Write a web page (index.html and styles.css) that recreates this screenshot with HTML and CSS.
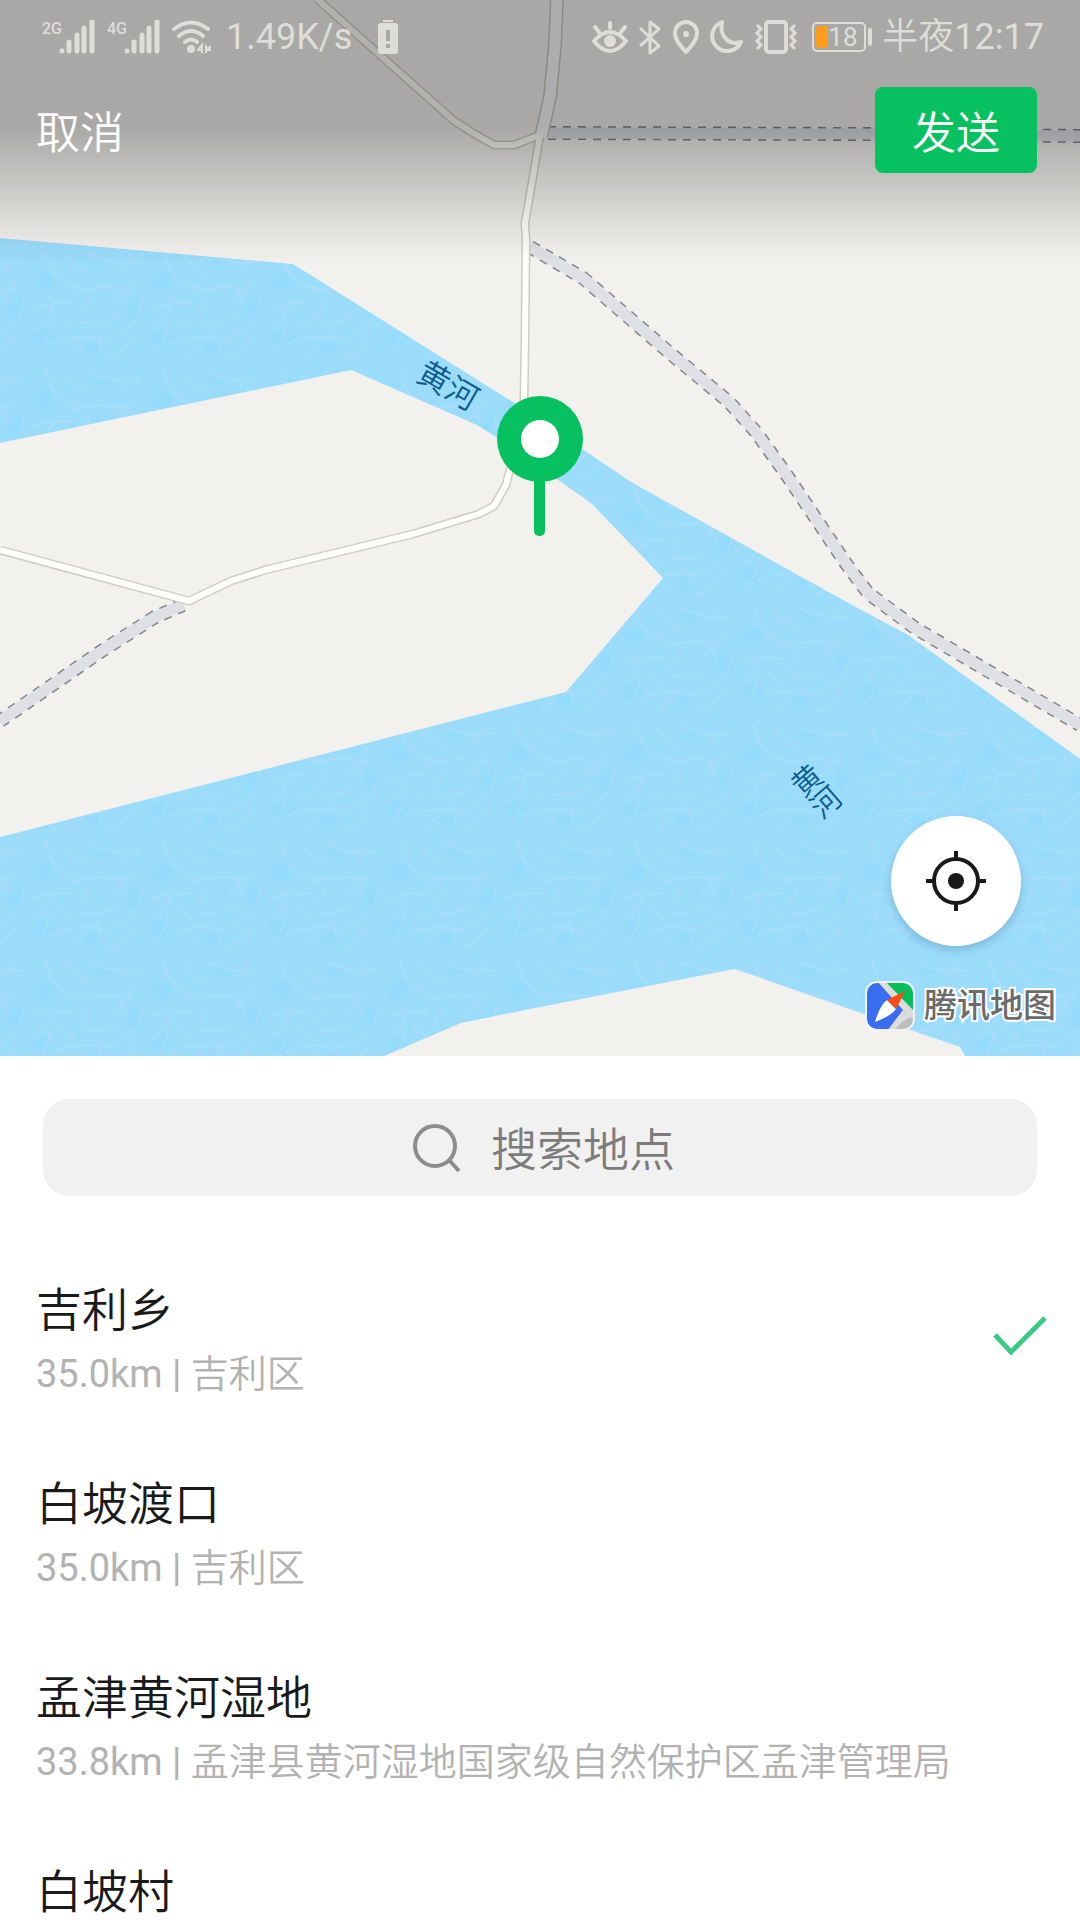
FILE: index.html
```html
<!DOCTYPE html>
<html lang="zh-CN">
<head>
<meta charset="utf-8">
<meta name="viewport" content="width=device-width, initial-scale=1">
<title>发送位置</title>
<link rel="stylesheet" href="styles.css">
</head>
<body>
<div class="app">
  <section class="map">
    <svg class="map-canvas" viewBox="0 0 1080 1056" aria-label="地图">
      <defs>
        <pattern id="ripple" width="118" height="118" patternUnits="userSpaceOnUse" patternTransform="translate(30 12)">
          <rect width="118" height="118" fill="#9bdcfb"/>
          <g fill="#8fd9fb" opacity=".5">
            <path d="M6 30l14-6 6 10-8 8-12-2zM98 54l12-4 4 14-8 10-8-8zM4 84l14-4 8 12-12 8-8-4zM50 98l18-4 8 6-14 6zM62 8l14 2 4 8-16 2z"/>
          </g>
          <g fill="none" stroke="#a8dcfb" stroke-width="2" stroke-linecap="round">
            <path d="M16 4q3 20 14 28t22 8M36 8q10 14 24 18M44 44q30-8 58-2M60 6q24 12 50 8"/>
            <path d="M104 32q-8 14-22 24M112 52q-2 20-16 30t-26 10M4 60q24-6 40-4M24 52q-4 20-18 30"/>
            <path d="M52 74q20 4 36-6M20 96q18-8 50-6M8 104q10-12 12-28M78 110q16-4 26-22M88 40l8 16M30 70l14 12M60 50l-10 18M100 8l-8 14M66 84l6 18M40 108l14-12"/>
          </g>
        </pattern>
      </defs>
      <rect width="1080" height="1056" fill="#f3f1ee"/>
      <path fill="url(#ripple)" d="M0 238L293 264L516 404L631 482L843 600L908 635L1080 759V1056H965L960 1047L864 1014L735 969L540 1007L461 1023L384 1056H0V837L566 692L663 578L591 503L558 480L496 437L477 425L351 370L0 443Z"/>
      <g fill="none" stroke-linejoin="round">
        <g stroke="#85858a" stroke-width="14" stroke-dasharray="8 7">
          <path d="M548 133L860 134L1080 136"/>
          <path d="M530 247L583 278L671 354L729 402L756 432L786 474L847 565L868 593L915 628L1080 725"/>
          <path d="M183 605L155 617L103 650L0 721"/>
        </g>
        <g stroke="#dfe0e6" stroke-width="11">
          <path d="M548 133L860 134L1080 136"/>
          <path d="M530 247L583 278L671 354L729 402L756 432L786 474L847 565L868 593L915 628L1080 725"/>
          <path d="M183 605L155 617L103 650L0 721"/>
        </g>
        <g stroke="#cdcdc6" stroke-width="9">
          <path d="M316 -2L453 120L473 133L494 145H514L540 135"/>
          <path d="M540 135L529 200L525 223L526 240L525 340L524 400L519 440L509 473L506 485L494 506L479 514L413 534L265 570L231 581L189 601L0 550"/>
        </g>
        <path d="M557 -2L555 45L550 97L541 137" stroke="#c4c4c2" stroke-width="14"/>
        <path d="M557 -2L555 45L550 97L541 137" stroke="#f7f8f9" stroke-width="11"/>
        <g stroke="#fefefa" stroke-width="6">
          <path d="M316 -2L453 120L473 133L494 145H514L540 135"/>
          <path d="M540 135L529 200L525 223L526 240L525 340L524 400L519 440L509 473L506 485L494 506L479 514L413 534L265 570L231 581L189 601L0 550"/>
        </g>
      </g>
      <g class="river-name">
        <text transform="translate(448 386) rotate(30)" dominant-baseline="central">黄河</text>
        <g transform="translate(817 792) rotate(-41)">
          <text y="-15" dominant-baseline="central">黄</text>
          <text y="14" dominant-baseline="central">河</text>
        </g>
      </g>
      <g fill="#07c160">
        <rect x="534" y="470" width="11" height="66" rx="5"/>
        <circle cx="540" cy="439" r="43"/>
        <circle cx="540" cy="439" r="19" fill="#fff"/>
      </g>
    </svg>

    <header class="top">
      <div class="status">
        <div class="status-left">
          <span class="signal">
            <span class="net">2G</span>
            <svg width="36" height="34" viewBox="0 0 36 34"><path d="M3 31v0M10 22v9M18 15v16M25 8v23M33 2v29" stroke="currentColor" stroke-width="5" stroke-linecap="round"/></svg>
          </span>
          <span class="signal">
            <span class="net">4G</span>
            <svg width="36" height="34" viewBox="0 0 36 34"><path d="M3 31v0M10 22v9M18 15v16M25 8v23M33 2v29" stroke="currentColor" stroke-width="5" stroke-linecap="round"/></svg>
          </span>
          <svg class="wifi" width="40" height="34" viewBox="0 0 40 34"><g fill="none" stroke="currentColor" stroke-width="4" stroke-linecap="round"><path d="M2 9Q19-4 36 9M7 16Q19 6 31 16M13 22Q19 17 25 22"/></g><circle cx="19" cy="29" r="4" fill="currentColor"/><path d="M30 33V25l-4 5h5M34 25v8M34 29l4-2v3h-4" fill="none" stroke="currentColor" stroke-width="2"/></svg>
          <span class="status-text latin">1.49K/s</span>
          <svg class="alert" width="20" height="34" viewBox="0 0 20 34"><path fill="currentColor" fill-rule="evenodd" d="M5 0h10v2H5zM3 3h14q3 0 3 3v25q0 3-3 3H3q-3 0-3-3V6q0-3 3-3zM8 10v11h4V10zM8 24v4h4v-4z"/></svg>
        </div>
        <div class="status-right">
          <svg width="36" height="34" viewBox="0 0 36 34"><g fill="none" stroke="currentColor" stroke-width="4" stroke-linecap="round"><path d="M2 21Q18 3 34 21Q18 41 2 21ZM18 8V3M7 12L3 7M29 12l4-5"/></g><circle cx="18" cy="21" r="6" fill="currentColor"/></svg>
          <svg width="24" height="36" viewBox="0 0 24 36"><path d="M2 9l19 18-9 7V3l9 7L2 27" fill="none" stroke="currentColor" stroke-width="3" stroke-linejoin="round"/></svg>
          <svg width="28" height="34" viewBox="0 0 28 34"><path d="M14 32C8 25 3 20 3 13a11 11 0 0 1 22 0c0 7-5 12-11 19z" fill="none" stroke="currentColor" stroke-width="4" stroke-linejoin="round"/><circle cx="14" cy="14" r="3" fill="currentColor"/></svg>
          <svg width="34" height="34" viewBox="0 0 34 34"><path d="M12 2A15 15 0 1 0 31 22C19 26 9 16 12 2Z" fill="none" stroke="currentColor" stroke-width="4" stroke-linejoin="round"/></svg>
          <svg width="44" height="34" viewBox="0 0 44 34"><g fill="none" stroke="currentColor" stroke-width="4"><rect x="12" y="2" width="20" height="30" rx="3"/><path stroke-width="3" d="M3 5l4 4-4 4 4 4-4 4 4 4-4 4M41 5l-4 4 4 4-4 4 4 4-4 4 4 4"/></g></svg>
          <span class="battery"><span class="battery-body latin"><span class="battery-level"></span>18</span><span class="battery-tip"></span></span>
          <time class="status-text">半夜<span class="latin">12:17</span></time>
        </div>
      </div>
      <nav class="actions">
        <button class="cancel" type="button">取消</button>
        <button class="send" type="button">发送</button>
      </nav>
    </header>

    <div class="map-tools">
      <button class="locate" type="button" aria-label="定位">
        <svg width="60" height="60" viewBox="0 0 60 60"><circle cx="30" cy="30" r="22" fill="none" stroke="#1a1a1a" stroke-width="4"/><circle cx="30" cy="30" r="8" fill="#1a1a1a"/><path d="M30 0v8M30 52v8M0 30h8M52 30h8" stroke="#1a1a1a" stroke-width="4"/></svg>
      </button>
      <div class="brand">
        <svg width="50" height="50" viewBox="0 0 50 50">
          <defs><clipPath id="tile"><rect x="1" y="1" width="48" height="48" rx="11"/></clipPath></defs>
          <g clip-path="url(#tile)">
            <rect width="50" height="50" fill="#dcdcdc"/>
            <path d="M0 0H12L38 29L22 50H0Z" fill="#3a6df0"/>
            <path d="M20 0H50V31Z" fill="#08bd5b"/>
            <path d="M30 50Q35 40 46 36L50 40V50Z" fill="#bdbdbd"/>
          </g>
          <rect x="1" y="1" width="48" height="48" rx="11" fill="none" stroke="#eef4f7" stroke-width="2"/>
          <path d="M22 19L31 28Q26 35 10 41Q15 24 22 19Z" fill="#fff"/>
          <path d="M40 10L22 19L31 28Z" fill="#fa4b10"/>
        </svg>
        <span>腾讯地图</span>
      </div>
    </div>
  </section>

  <main class="sheet">
    <label class="search">
      <svg width="48" height="50" viewBox="0 0 48 50" aria-hidden="true"><circle cx="22" cy="23" r="20" fill="none" stroke="#8c8c8c" stroke-width="4"/><path d="M36 37L46 48" stroke="#8c8c8c" stroke-width="4"/></svg>
      <input type="text" placeholder="搜索地点" aria-label="搜索地点">
    </label>
    <ul class="places">
      <li><label class="place">
        <input type="radio" name="place" checked>
        <span class="place-text"><span class="place-name">吉利乡</span><span class="place-info"><span class="latin">35.0km | </span>吉利区</span></span>
        <svg class="tick" width="54" height="40" viewBox="0 0 54 40" aria-hidden="true"><path d="M2 19L18 36L52 2" fill="none" stroke="#3cc984" stroke-width="5"/></svg>
      </label></li>
      <li><label class="place">
        <input type="radio" name="place">
        <span class="place-text"><span class="place-name">白坡渡口</span><span class="place-info"><span class="latin">35.0km | </span>吉利区</span></span>
      </label></li>
      <li><label class="place">
        <input type="radio" name="place">
        <span class="place-text"><span class="place-name">孟津黄河湿地</span><span class="place-info"><span class="latin">33.8km | </span>孟津县黄河湿地国家级自然保护区孟津管理局</span></span>
      </label></li>
      <li><label class="place">
        <input type="radio" name="place">
        <span class="place-text"><span class="place-name">白坡村</span></span>
      </label></li>
    </ul>
  </main>
</div>
</body>
</html>
```
FILE: styles.css
```css
* {
  box-sizing: border-box;
}

body {
  margin: 0;
  background: #fff;
  color: #1a1a1a;
  font-family: Roboto, "Noto Sans CJK SC", sans-serif;
  font-weight: 350;
}

button,
input {
  margin: 0;
  padding: 0;
  border: 0;
  background: none;
  font: inherit;
}

svg {
  display: block;
  flex: none;
}

.latin {
  font-weight: 400;
}

.app {
  display: flex;
  flex-direction: column;
  height: 100vh;
  overflow: hidden;
}

/* Map */
.map {
  position: relative;
  flex: none;
}

.map-canvas {
  width: 100%;
  height: auto;
}

.river-name {
  fill: #0b5c8f;
  font-size: 32px;
  text-anchor: middle;
}

.river-name g {
  font-size: 30px;
}

.top {
  position: absolute;
  inset: 0 0 auto;
  height: 264px;
  background: linear-gradient(rgba(0, 0, 0, 0.3) 48%, rgba(0, 0, 0, 0.16) 72%, rgba(0, 0, 0, 0.07) 86%, transparent);
}

.status {
  display: flex;
  justify-content: space-between;
  align-items: center;
  height: 74px;
  padding: 0 36px 0 42px;
  color: #deded9;
}

.status-left,
.status-right,
.signal {
  display: flex;
  align-items: center;
}

.signal {
  margin-right: 12px;
}

.net {
  width: 17px;
  height: 34px;
  font-size: 16px;
  font-weight: 500;
  line-height: 18px;
}

.wifi {
  margin-right: 14px;
}

.status-text {
  font-size: 36px;
  line-height: 40px;
}

.alert {
  margin-left: 26px;
}

.status-right {
  gap: 10px;
}

.battery {
  display: flex;
  align-items: center;
  gap: 2px;
  margin-left: 4px;
}

.battery-body {
  display: flex;
  align-items: center;
  width: 54px;
  height: 30px;
  padding: 2px;
  border: 2px solid;
  border-radius: 5px;
  font-size: 26px;
}

.battery-level {
  width: 12px;
  height: 22px;
  border-radius: 3px;
  background: #ff9c1a;
}

.battery-tip {
  width: 4px;
  height: 18px;
  border-radius: 2px;
  background: currentColor;
}

.actions {
  display: flex;
  justify-content: space-between;
  align-items: center;
  margin-top: 13px;
  padding: 0 43px 0 36px;
  color: #fff;
  font-size: 44px;
}

.cancel,
.send {
  color: inherit;
}

.send {
  width: 162px;
  height: 86px;
  border-radius: 8px;
  background: #07c160;
}

.map-tools {
  position: absolute;
  right: 24px;
  bottom: 25px;
  display: flex;
  flex-direction: column;
  align-items: flex-end;
  gap: 35px;
}

.locate {
  display: grid;
  place-items: center;
  width: 130px;
  height: 130px;
  margin-right: 35px;
  border-radius: 50%;
  background: #fff;
  box-shadow: 0 4px 10px rgba(0, 40, 80, 0.2);
}

.brand {
  display: flex;
  align-items: center;
  gap: 9px;
  color: #6b6b6b;
  font-size: 33px;
  font-weight: 500;
  line-height: 50px;
  -webkit-text-stroke: 4px #fff;
  paint-order: stroke fill;
}

/* Place sheet */
.sheet {
  flex: 1;
  min-height: 0;
  padding-top: 43px;
}

.search {
  display: flex;
  justify-content: center;
  align-items: center;
  gap: 30px;
  height: 97px;
  margin: 0 43px;
  padding-left: 8px;
  border-radius: 26px;
  background: #f1f1f1;
}

.search input {
  width: 4em;
  padding-top: 4px;
  font-size: 46px;
  outline: none;
}

.search input::placeholder {
  color: #7c7c7c;
}

.places {
  margin: 49px 0 0;
  padding: 0;
  list-style: none;
}

.place {
  display: flex;
  justify-content: space-between;
  align-items: flex-start;
  padding: 33px 33px 33px 36px;
}

.place input {
  position: absolute;
  opacity: 0;
}

.place-text {
  display: flex;
  flex-direction: column;
  line-height: 64px;
}

.place-name {
  font-size: 46px;
}

.place-info {
  color: #b2b2b2;
  font-size: 38px;
}

.tick {
  margin-top: 38px;
}
```
